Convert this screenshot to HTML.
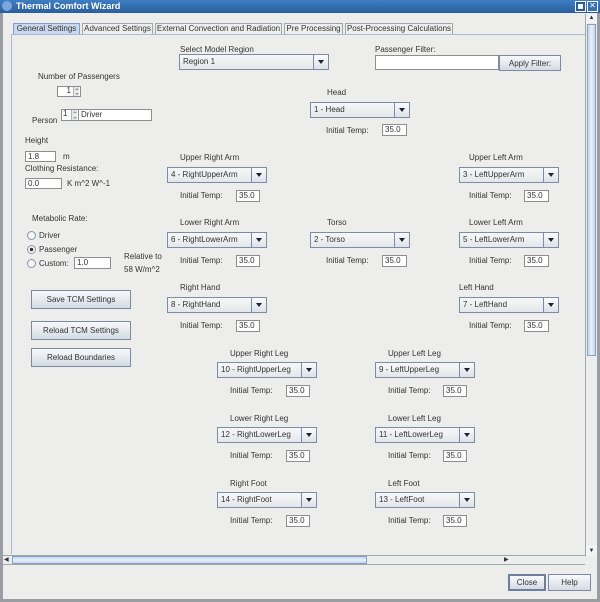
<!DOCTYPE html><html><head><style>
*{box-sizing:border-box;margin:0;padding:0}
body{width:600px;height:602px;background:#edeeeb;font-family:"Liberation Sans",sans-serif;font-size:8px;color:#333;position:relative;overflow:hidden}
.a{position:absolute;white-space:nowrap}
.tf{position:absolute;background:#fff;border:1px solid #8c8e90;font-size:8px;padding:1px 2px;line-height:8px}
.cb{position:absolute;height:16px;border:1px solid #7c8ca4;background:linear-gradient(#f6f7f8,#e4e7ea);font-size:8px;padding:3px 3px;line-height:8px}
.cb i{position:absolute;right:0;top:0;width:15px;height:14px;border-left:1px solid #7c8ca4;background:linear-gradient(#fafbfc,#dde2e8)}
.cb i:after{content:"";position:absolute;left:4px;top:5px;border-left:3px solid transparent;border-right:3px solid transparent;border-top:4px solid #223}
.bt{position:absolute;border:1px solid #7a8aa2;background:linear-gradient(#f8f9fb,#d4dbe5);text-align:center;font-size:8px;line-height:16px}
.tab{position:absolute;top:23px;height:12px;border:1px solid #a0a6ae;border-bottom:none;background:#eeeeec;font-size:8px;line-height:10px;text-align:center}
.rd{position:absolute;width:9px;height:9px;border-radius:50%;border:1px solid #8a96a8;background:#f4f6f8}
.sp{position:absolute;width:6px;background:#e6e8ea;border-left:1px solid #b0b4b8}
.sp:before,.sp:after{content:"";position:absolute;left:1px;border-left:2px solid transparent;border-right:2px solid transparent}
.sp:before{top:1px;border-bottom:2px solid #999}
.sp:after{bottom:1px;border-top:2px solid #999}
</style></head><body>
<div class="a" style="left:0;top:0;width:600px;height:13px;background:linear-gradient(#3f7ec2,#2a5e9c)"></div>
<div class="a" style="left:2px;top:1px;width:10px;height:10px;border-radius:50%;background:#7aa6dc"></div>
<div class="a" style="left:16px;top:1px;color:#fff;font-weight:bold;font-size:9px;">Thermal Comfort Wizard</div>
<div class="a" style="left:576px;top:2px;width:9px;height:9px;background:#fff;border:2px solid #2a5e9c;outline:1px solid #fff"></div>
<div class="a" style="left:588px;top:2px;width:9px;height:9px;background:#3a70b0;color:#fff;font-size:8px;line-height:8px;text-align:center;outline:1px solid #fff">✕</div>
<div class="a" style="left:0;top:13px;width:3px;height:589px;background:#9a9ea4"></div>
<div class="a" style="left:597px;top:13px;width:3px;height:589px;background:#9a9ea4"></div>
<div class="a" style="left:0;top:599px;width:600px;height:3px;background:#9a9ea4"></div>

<div class="tab" style="left:13px;width:67px;background:#c9d8ee;border-color:#7f9dc6">General Settings</div>
<div class="tab" style="left:82px;width:71px">Advanced Settings</div>
<div class="tab" style="left:155px;width:127px">External Convection and Radiation</div>
<div class="tab" style="left:284px;width:59px">Pre Processing</div>
<div class="tab" style="left:345px;width:108px">Post-Processing Calculations</div>
<div class="a" style="left:11px;top:34px;width:576px;height:520px;border-left:1px solid #a8bcd8;border-top:1px solid #a8bcd8"></div>

<div class="a" style="left:180px;top:45px">Select Model Region</div>
<div class="cb" style="left:179px;top:54px;width:150px">Region 1<i></i></div>
<div class="a" style="left:375px;top:45px">Passenger Filter:</div>
<div class="tf" style="left:375px;top:55px;width:124px;height:15px"></div>
<div class="bt" style="left:499px;top:55px;width:62px;height:16px">Apply Filter:</div>

<div class="a" style="left:38px;top:72px">Number of Passengers</div>
<div class="tf" style="left:57px;top:86px;width:24px;height:11px;text-align:right;padding:0 9px 0 0">1</div>
<div class="sp" style="left:73px;top:87px;height:9px"></div>
<div class="a" style="left:32px;top:116px">Person</div>
<div class="tf" style="left:61px;top:109px;width:18px;height:12px;padding:0 1px">1</div>
<div class="sp" style="left:71px;top:110px;height:10px"></div>
<div class="tf" style="left:78px;top:109px;width:74px;height:12px">Driver</div>

<div class="a" style="left:327px;top:88px">Head</div>
<div class="cb" style="left:310px;top:102px;width:100px">1 - Head<i></i></div>
<div class="a" style="left:326px;top:126px">Initial Temp:</div>
<div class="tf" style="left:382px;top:124px;width:25px;height:12px">35.0</div>

<div class="a" style="left:25px;top:136px">Height</div>
<div class="tf" style="left:25px;top:151px;width:31px;height:11px">1.8</div>
<div class="a" style="left:63px;top:152px">m</div>
<div class="a" style="left:25px;top:164px">Clothing Resistance:</div>
<div class="tf" style="left:25px;top:178px;width:37px;height:11px">0.0</div>
<div class="a" style="left:67px;top:179px">K m^2 W^-1</div>

<div class="a" style="left:32px;top:214px">Metabolic Rate:</div>
<div class="rd" style="left:27px;top:231px"></div><div class="a" style="left:39px;top:231px">Driver</div>
<div class="rd" style="left:27px;top:245px;background:radial-gradient(#333 30%,#f4f6f8 40%)"></div><div class="a" style="left:39px;top:245px">Passenger</div>
<div class="rd" style="left:27px;top:259px"></div><div class="a" style="left:39px;top:259px">Custom:</div>
<div class="tf" style="left:74px;top:257px;width:37px;height:12px">1.0</div>
<div class="a" style="left:124px;top:252px">Relative to</div>
<div class="a" style="left:124px;top:265px">58 W/m^2</div>

<div class="bt" style="left:31px;top:290px;width:100px;height:19px;line-height:17px">Save TCM Settings</div>
<div class="bt" style="left:31px;top:321px;width:100px;height:19px;line-height:17px">Reload TCM Settings</div>
<div class="bt" style="left:31px;top:348px;width:100px;height:19px;line-height:17px">Reload Boundaries</div>

<div class="a" style="left:180px;top:153px">Upper Right Arm</div>
<div class="cb" style="left:167px;top:167px;width:100px">4 - RightUpperArm<i></i></div>
<div class="a" style="left:180px;top:191px">Initial Temp:</div>
<div class="tf" style="left:236px;top:190px;width:24px;height:12px">35.0</div>
<div class="a" style="left:469px;top:153px">Upper Left Arm</div>
<div class="cb" style="left:459px;top:167px;width:100px">3 - LeftUpperArm<i></i></div>
<div class="a" style="left:469px;top:191px">Initial Temp:</div>
<div class="tf" style="left:524px;top:190px;width:25px;height:12px">35.0</div>

<div class="a" style="left:180px;top:218px">Lower Right Arm</div>
<div class="cb" style="left:167px;top:232px;width:100px">6 - RightLowerArm<i></i></div>
<div class="a" style="left:180px;top:256px">Initial Temp:</div>
<div class="tf" style="left:236px;top:255px;width:24px;height:12px">35.0</div>
<div class="a" style="left:327px;top:218px">Torso</div>
<div class="cb" style="left:310px;top:232px;width:100px">2 - Torso<i></i></div>
<div class="a" style="left:326px;top:256px">Initial Temp:</div>
<div class="tf" style="left:382px;top:255px;width:25px;height:12px">35.0</div>
<div class="a" style="left:469px;top:218px">Lower Left Arm</div>
<div class="cb" style="left:459px;top:232px;width:100px">5 - LeftLowerArm<i></i></div>
<div class="a" style="left:469px;top:256px">Initial Temp:</div>
<div class="tf" style="left:524px;top:255px;width:25px;height:12px">35.0</div>

<div class="a" style="left:180px;top:283px">Right Hand</div>
<div class="cb" style="left:167px;top:297px;width:100px">8 - RightHand<i></i></div>
<div class="a" style="left:180px;top:321px">Initial Temp:</div>
<div class="tf" style="left:236px;top:320px;width:24px;height:12px">35.0</div>
<div class="a" style="left:459px;top:283px">Left Hand</div>
<div class="cb" style="left:459px;top:297px;width:100px">7 - LeftHand<i></i></div>
<div class="a" style="left:469px;top:321px">Initial Temp:</div>
<div class="tf" style="left:524px;top:320px;width:25px;height:12px">35.0</div>

<div class="a" style="left:230px;top:349px">Upper Right Leg</div>
<div class="cb" style="left:217px;top:362px;width:100px">10 - RightUpperLeg<i></i></div>
<div class="a" style="left:230px;top:386px">Initial Temp:</div>
<div class="tf" style="left:286px;top:385px;width:24px;height:12px">35.0</div>
<div class="a" style="left:388px;top:349px">Upper Left Leg</div>
<div class="cb" style="left:375px;top:362px;width:100px">9 - LeftUpperLeg<i></i></div>
<div class="a" style="left:388px;top:386px">Initial Temp:</div>
<div class="tf" style="left:443px;top:385px;width:24px;height:12px">35.0</div>

<div class="a" style="left:230px;top:414px">Lower Right Leg</div>
<div class="cb" style="left:217px;top:427px;width:100px">12 - RightLowerLeg<i></i></div>
<div class="a" style="left:230px;top:451px">Initial Temp:</div>
<div class="tf" style="left:286px;top:450px;width:24px;height:12px">35.0</div>
<div class="a" style="left:388px;top:414px">Lower Left Leg</div>
<div class="cb" style="left:375px;top:427px;width:100px">11 - LeftLowerLeg<i></i></div>
<div class="a" style="left:388px;top:451px">Initial Temp:</div>
<div class="tf" style="left:443px;top:450px;width:24px;height:12px">35.0</div>

<div class="a" style="left:230px;top:479px">Right Foot</div>
<div class="cb" style="left:217px;top:492px;width:100px">14 - RightFoot<i></i></div>
<div class="a" style="left:230px;top:516px">Initial Temp:</div>
<div class="tf" style="left:286px;top:515px;width:24px;height:12px">35.0</div>
<div class="a" style="left:388px;top:479px">Left Foot</div>
<div class="cb" style="left:375px;top:492px;width:100px">13 - LeftFoot<i></i></div>
<div class="a" style="left:388px;top:516px">Initial Temp:</div>
<div class="tf" style="left:443px;top:515px;width:24px;height:12px">35.0</div>

<div class="a" style="left:585px;top:14px;width:12px;height:542px;background:#eceeee;border-left:1px solid #9aa"></div>
<div class="a" style="left:586px;top:14px;width:11px;height:9px;background:#f2f3f4;font-size:6px;text-align:center;line-height:9px">▲</div>
<div class="a" style="left:587px;top:24px;width:9px;height:332px;background:linear-gradient(90deg,#c4d4ec,#eaf0f8,#c4d4ec);border:1px solid #8aa0c4"></div>
<div class="a" style="left:586px;top:546px;width:11px;height:10px;background:#f2f3f4;font-size:6px;text-align:center;line-height:10px">▼</div>
<div class="a" style="left:3px;top:555px;width:582px;height:10px;background:#eceeee;border-top:1px solid #9aa;border-bottom:1px solid #9aa"></div>
<div class="a" style="left:4px;top:556px;width:8px;height:8px;font-size:6px;line-height:8px">◀</div>
<div class="a" style="left:12px;top:556px;width:355px;height:8px;background:linear-gradient(#c4d4ec,#eaf0f8,#c4d4ec);border:1px solid #8aa0c4"></div>
<div class="a" style="left:504px;top:556px;width:8px;height:8px;font-size:6px;line-height:8px">▶</div>

<div class="bt" style="left:508px;top:574px;width:38px;height:17px;border:2px solid #6d7f9a;line-height:13px">Close</div>
<div class="bt" style="left:548px;top:574px;width:43px;height:17px">Help</div>
</body></html>
